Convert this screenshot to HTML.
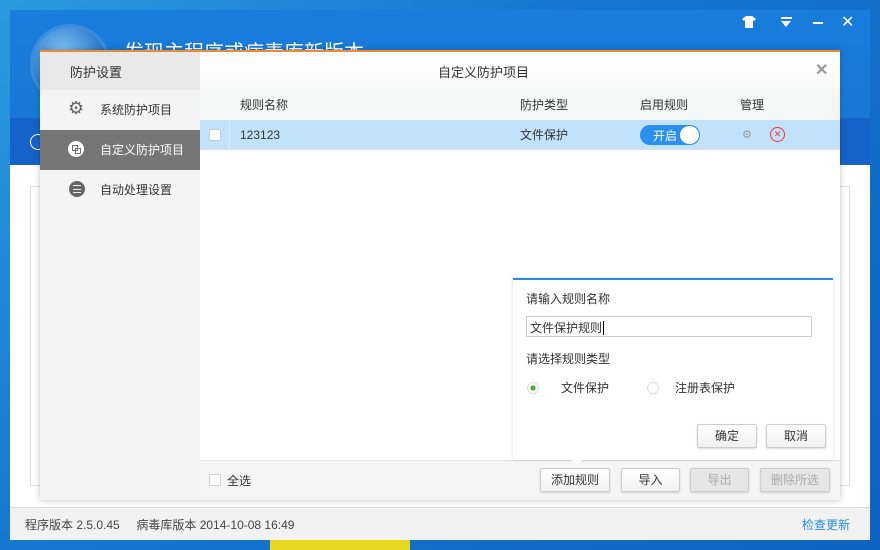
<!DOCTYPE html>
<html><head><meta charset="utf-8"><style>
*{margin:0;padding:0;box-sizing:border-box}
body{width:880px;height:550px;overflow:hidden;position:relative;font-family:"Liberation Sans","Noto Sans CJK SC",sans-serif;font-size:12px;color:#333;background:linear-gradient(135deg,#2a9be0 0%,#1577d0 40%,#0e63c0 100%)}
.abs{position:absolute}
.win{left:10px;top:10px;width:860px;height:530px;background:#fff}
.hdr{left:0;top:0;width:860px;height:108px;background:linear-gradient(180deg,#1a7ddb,#1878d6)}
.band{left:0;top:108px;width:860px;height:47px;background:#1563c9}
.foot{left:0;top:497px;width:860px;height:33px;background:#f2f2f2;border-top:1px solid #ddd}
.dlg{left:40px;top:50px;width:800px;height:450px;background:#fff;border-top:2px solid #f08a30;box-shadow:0 0 6px rgba(0,0,0,.25)}
.side{left:0;top:0;width:160px;height:448px;background:#f4f4f4}
.btn{position:absolute;height:24px;border:1px solid #ccc;border-radius:2px;background:linear-gradient(#fff,#f1f1f1);text-align:center;line-height:22px;font-size:12px;box-shadow:0 1px 2px rgba(0,0,0,.15)}
.dis{color:#aaa;background:#e6e6e6}
</style></head><body>
<div class="abs win">
 <div class="abs hdr"></div>
 <div class="abs" style="left:20px;top:14px;width:80px;height:80px;border-radius:50%;background:radial-gradient(circle at 40% 35%,#7ec3f5,#1f6fc4 70%);border:3px solid #3a8ee0"></div>
 <div class="abs" style="left:114px;top:26px;color:#fff;font-size:20px">发现主程序或病毒库新版本</div>
 <svg class="abs" style="left:732px;top:6px" width="14" height="12" viewBox="0 0 14 12"><path d="M0 3L4 0H10L14 3L12 5L11 4V12H3V4L2 5Z" fill="#fff"/></svg>
 <div class="abs" style="left:771px;top:7px;width:11px;height:2px;background:#fff"></div>
 <div class="abs" style="left:771px;top:11px;width:0;height:0;border-left:5.5px solid transparent;border-right:5.5px solid transparent;border-top:6px solid #fff"></div>
 <div class="abs" style="left:803px;top:12px;width:10px;height:2px;background:#fff"></div>
 <div class="abs" style="left:831px;top:2px;color:#fff;font-size:16px">✕</div>
 <div class="abs band"></div>
 <div class="abs" style="left:20px;top:124px;width:16px;height:16px;border:1px solid #fff;border-radius:50%"></div>
 <div class="abs" style="left:20px;top:176px;width:820px;height:300px;border:1px solid #e2e2e2"></div>
 <div class="abs foot">
  <div class="abs" style="left:15px;top:8px;color:#444">程序版本 2.5.0.45&nbsp;&nbsp;&nbsp;&nbsp;&nbsp;病毒库版本 2014-10-08 16:49</div>
  <div class="abs" style="left:792px;top:8px;color:#2a8be0">检查更新</div>
 </div>
</div>
<div class="abs" style="left:270px;top:540px;width:140px;height:10px;background:#e8d820"></div>
<div class="abs dlg">
 <div class="abs side">
  <div class="abs" style="left:0;top:0;width:160px;height:38px;background:#e9e9e9;padding:10px 0 0 30px;font-size:13px">防护设置</div>
  <div class="abs" style="left:28px;top:46px;font-size:18px;color:#666">⚙</div>
  <div class="abs" style="left:60px;top:49px">系统防护项目</div>
  <div class="abs" style="left:0;top:78px;width:160px;height:40px;background:#757575"></div>
  <div class="abs" style="left:28px;top:89px;width:16px;height:16px;border-radius:50%;background:#fff"></div>
  <div class="abs" style="left:32px;top:93px;width:6px;height:6px;border:1px solid #757575"></div>
  <div class="abs" style="left:35px;top:96px;width:6px;height:6px;border:1px solid #757575"></div>
  <div class="abs" style="left:60px;top:89px;color:#fff">自定义防护项目</div>
  <div class="abs" style="left:29px;top:129px;width:16px;height:16px;border-radius:50%;background:#666"></div>
  <div class="abs" style="left:33px;top:133px;width:8px;height:8px;border-top:1px solid #eee;border-bottom:1px solid #eee;background:linear-gradient(#666 3px,#eee 3px,#eee 4px,#666 4px)"></div>
  <div class="abs" style="left:60px;top:129px">自动处理设置</div>
 </div>
 <div class="abs" style="left:160px;top:0;width:640px;height:38px;background:linear-gradient(#fff,#f8f8f8)"></div>
 <div class="abs" style="left:398px;top:10px;font-size:13px">自定义防护项目</div>
 <div class="abs" style="left:775px;top:8px;font-size:16px;color:#999;font-weight:bold">✕</div>
 <div class="abs" style="left:160px;top:38px;width:640px;height:30px;background:#f5f6f6"></div>
 <div class="abs" style="left:200px;top:44px">规则名称</div>
 <div class="abs" style="left:480px;top:44px">防护类型</div>
 <div class="abs" style="left:600px;top:44px">启用规则</div>
 <div class="abs" style="left:700px;top:44px">管理</div>
 <div class="abs" style="left:160px;top:68px;width:640px;height:30px;background:#c2e1fb;border-bottom:1px solid #dde"></div>
 <div class="abs" style="left:189px;top:68px;width:1px;height:30px;background:#e0eefa"></div>
 <div class="abs" style="left:169px;top:77px;width:12px;height:12px;background:#fff;border:1px solid #ccc;border-radius:2px"></div>
 <div class="abs" style="left:200px;top:76px">123123</div>
 <div class="abs" style="left:480px;top:74px">文件保护</div>
 <div class="abs" style="left:600px;top:73px;width:60px;height:20px;border-radius:10px;background:#2b8ff0;color:#fff;padding:2px 0 0 13px">开启</div>
 <div class="abs" style="left:640px;top:74px;width:19px;height:18px;border-radius:50%;background:#fff"></div>
 <div class="abs" style="left:702px;top:76px;color:#999;font-size:11px">⚙</div>
 <div class="abs" style="left:730px;top:75px;width:15px;height:15px;border-radius:50%;border:1px solid #e33;color:#e33;font-size:9px;text-align:center;line-height:13px">✕</div>
 <div class="abs" style="left:160px;top:408px;width:640px;height:40px;background:#f5f5f5;border-top:1px solid #e4e4e4"></div>
 <div class="abs" style="left:169px;top:422px;width:12px;height:12px;background:#fff;border:1px solid #ccc;border-radius:2px"></div>
 <div class="abs" style="left:187px;top:420px">全选</div>
 <div class="btn" style="left:500px;top:416px;width:70px">添加规则</div>
 <div class="btn" style="left:581px;top:416px;width:59px">导入</div>
 <div class="btn dis" style="left:650px;top:416px;width:59px">导出</div>
 <div class="btn dis" style="left:720px;top:416px;width:70px">删除所选</div>
 <div class="abs" style="left:473px;top:226px;width:320px;height:182px;background:#fff;border-top:2px solid #2a8be0;box-shadow:0 0 3px rgba(0,0,0,.15)"></div>
 <div class="abs" style="left:531px;top:407px;width:0;height:0;border-left:6px solid transparent;border-right:6px solid transparent;border-top:6px solid #fff"></div>
 <div class="abs" style="left:486px;top:238px">请输入规则名称</div>
 <div class="abs" style="left:486px;top:264px;width:286px;height:21px;border:1px solid #ccc;padding:2px 3px">文件保护规则<span style="border-left:1px solid #000;margin-left:1px"></span></div>
 <div class="abs" style="left:486px;top:298px">请选择规则类型</div>
 <div class="abs" style="left:487px;top:330px;width:12px;height:12px;border-radius:50%;border:1px solid #ddd;background:radial-gradient(#4caf3a 35%,#fff 40%)"></div>
 <div class="abs" style="left:521px;top:327px">文件保护</div>
 <div class="abs" style="left:607px;top:330px;width:12px;height:12px;border-radius:50%;border:1px solid #ddd"></div>
 <div class="abs" style="left:635px;top:327px">注册表保护</div>
 <div class="btn" style="left:657px;top:372px;width:60px">确定</div>
 <div class="btn" style="left:726px;top:372px;width:60px">取消</div>
</div>
</body></html>
